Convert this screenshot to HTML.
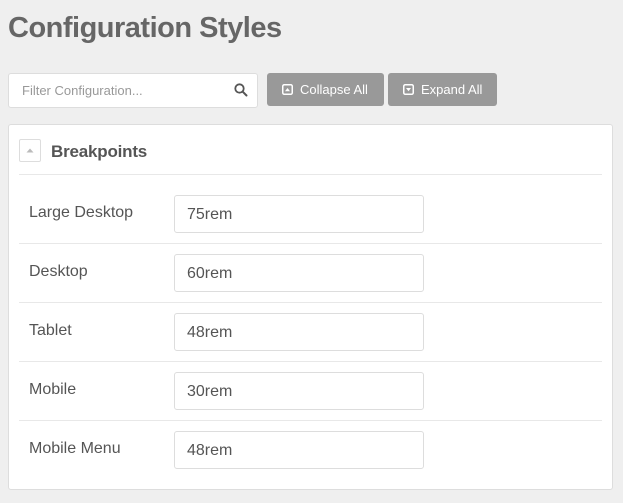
<!DOCTYPE html>
<html><head><meta charset="utf-8"><style>
*{box-sizing:border-box;margin:0;padding:0}
body{width:623px;height:503px;background:#efefef;font-family:"Liberation Sans",sans-serif;position:relative;overflow:hidden;color:#555}
.abs{position:absolute}
h1{position:absolute;left:8px;top:9px;font-size:29px;font-weight:bold;color:#666;letter-spacing:-0.5px;line-height:38px}
.filter{left:8px;top:73px;width:250px;height:35px;background:#fff;border:1px solid #ddd;border-radius:3px}
.filter span{position:absolute;left:13px;top:9px;font-size:13px;color:#999}
.btn{top:73px;height:33px;background:#999;border-radius:3px;color:#fff;font-size:13px;line-height:33px}
.panel{left:8px;top:124px;width:605px;height:366px;background:#fff;border:1px solid #ddd;border-radius:3px}
.tog{left:19px;top:139px;width:22px;height:23px;border:1px solid #ddd;border-radius:2px;background:#fff}
.ttl{left:51px;top:141px;font-size:17px;font-weight:bold;color:#555;line-height:22px;letter-spacing:-0.2px}
.hr{left:19px;width:583px;height:1px;background:#e8e8e8}
.lbl{left:29px;font-size:16px;color:#555;line-height:20px}
.inp{left:174px;width:250px;height:38px;border:1px solid #ddd;border-radius:3px;background:#fff;font-size:16px;color:#555;padding-left:12px;line-height:37px}
</style></head><body>
<h1>Configuration Styles</h1>
<div class="abs filter"><span>Filter Configuration...</span>
<svg class="abs" style="left:225px;top:9px" width="14" height="14" viewBox="0 0 14 14"><circle cx="5.5" cy="5.5" r="4.2" fill="none" stroke="#555" stroke-width="1.8"/><path d="M8.6 8.6L12.5 12.5" stroke="#555" stroke-width="2" stroke-linecap="round"/></svg></div>
<div class="abs btn" style="left:267px;width:117px">
<svg class="abs" style="left:15px;top:11px" width="11" height="11" viewBox="0 0 11 11"><rect x="0.75" y="0.75" width="9.5" height="9.5" rx="1.5" fill="none" stroke="#fff" stroke-width="1.5"/><path d="M3 7.3h5L5.5 4z" fill="#fff"/></svg>
<span class="abs" style="left:33px">Collapse All</span></div>
<div class="abs btn" style="left:388px;width:109px">
<svg class="abs" style="left:15px;top:11px" width="11" height="11" viewBox="0 0 11 11"><rect x="0.75" y="0.75" width="9.5" height="9.5" rx="1.5" fill="none" stroke="#fff" stroke-width="1.5"/><path d="M3 4h5L5.5 7.3z" fill="#fff"/></svg>
<span class="abs" style="left:33px">Expand All</span></div>
<div class="abs panel"></div>
<div class="abs tog"><svg class="abs" style="left:6px;top:8px" width="8" height="5" viewBox="0 0 8 5"><path d="M0.5 4.5h7L4 0.5z" fill="#bbb"/></svg></div>
<div class="abs ttl">Breakpoints</div>
<div class="abs hr" style="top:174px"></div>

<div class="abs lbl" style="top:203px">Large Desktop</div><div class="abs inp" style="top:195px">75rem</div>
<div class="abs hr" style="top:243px"></div>
<div class="abs lbl" style="top:262px">Desktop</div><div class="abs inp" style="top:254px">60rem</div>
<div class="abs hr" style="top:302px"></div>
<div class="abs lbl" style="top:321px">Tablet</div><div class="abs inp" style="top:313px">48rem</div>
<div class="abs hr" style="top:361px"></div>
<div class="abs lbl" style="top:380px">Mobile</div><div class="abs inp" style="top:372px">30rem</div>
<div class="abs hr" style="top:420px"></div>
<div class="abs lbl" style="top:439px">Mobile Menu</div><div class="abs inp" style="top:431px">48rem</div>
</body></html>
